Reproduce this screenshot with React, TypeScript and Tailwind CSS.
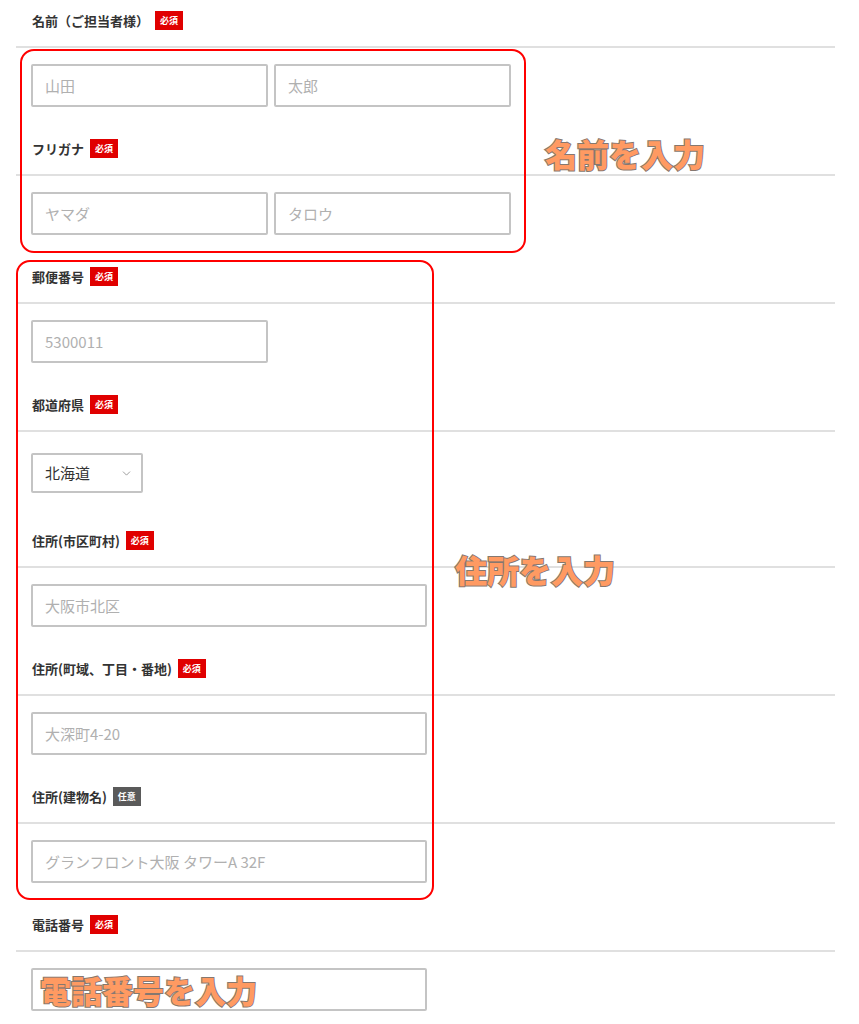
import { ChevronDown } from 'lucide-react';

type Field = {
  label: string;
  optional?: boolean;
  kind: 'pair' | 'short' | 'wide' | 'select';
  placeholders?: string[];
};

const fields: Field[] = [
  { label: '名前（ご担当者様）', kind: 'pair', placeholders: ['山田', '太郎'] },
  { label: 'フリガナ', kind: 'pair', placeholders: ['ヤマダ', 'タロウ'] },
  { label: '郵便番号', kind: 'short', placeholders: ['5300011'] },
  { label: '都道府県', kind: 'select' },
  { label: '住所(市区町村)', kind: 'wide', placeholders: ['大阪市北区'] },
  { label: '住所(町域、丁目・番地)', kind: 'wide', placeholders: ['大深町4-20'] },
  { label: '住所(建物名)', optional: true, kind: 'wide', placeholders: ['グランフロント大阪 タワーA 32F'] },
  { label: '電話番号', kind: 'wide', placeholders: [''] },
];

const inputClass =
  'h-[43px] border-2 border-[#c4c4c4] rounded-[2px] bg-white px-3 text-[15px] text-[#333] placeholder:text-[#b0b0b0] outline-none';

function Badge({ optional }: { optional?: boolean }) {
  return (
    <span
      className={`ml-1.5 inline-flex h-[19px] items-center px-[5px] text-[9px] font-bold leading-none text-white ${
        optional ? 'bg-[#5a5a5a]' : 'bg-[#e00000]'
      }`}
    >
      {optional ? '任意' : '必須'}
    </span>
  );
}

function FormField({ field }: { field: Field }) {
  const isSelect = field.kind === 'select';
  return (
    <div>
      <div className="flex h-[48px] items-center border-b-2 border-[#e0e0e0] pb-[5px] pl-4">
        <span className="text-[13px] font-bold text-[#333]">{field.label}</span>
        <Badge optional={field.optional} />
      </div>
      <div className={isSelect ? 'pt-[21px] pb-[27px] pl-[15px]' : 'pt-4 pb-[21px] pl-[15px]'}>
        {field.kind === 'pair' && (
          <div className="flex gap-[6px]">
            {field.placeholders!.map((p) => (
              <input key={p} className={`${inputClass} w-[237px]`} placeholder={p} />
            ))}
          </div>
        )}
        {field.kind === 'short' && (
          <input className={`${inputClass} w-[237px]`} placeholder={field.placeholders![0]} />
        )}
        {field.kind === 'wide' && (
          <input className={`${inputClass} w-[396px]`} placeholder={field.placeholders![0]} />
        )}
        {isSelect && (
          <div className="relative w-[112px]">
            <select className="h-[40px] w-full appearance-none rounded-[2px] border-2 border-[#c4c4c4] bg-white pl-3 text-[15px] text-[#333] outline-none">
              <option>北海道</option>
            </select>
            <ChevronDown
              size={13}
              strokeWidth={1.5}
              className="pointer-events-none absolute right-[10px] top-[14px] text-[#888]"
            />
          </div>
        )}
      </div>
    </div>
  );
}

const noteClass =
  'absolute font-black leading-none text-[#ff9a62] [paint-order:stroke_fill] [-webkit-text-stroke:2px_#857870]';

export default function App() {
  return (
    <div
      className="relative min-h-[1024px] bg-white"
      style={{ fontFamily: '"Noto Sans CJK JP", "Noto Sans", sans-serif' }}
    >
      <div className="ml-4 w-[819px]">
        {fields.map((f) => (
          <FormField key={f.label} field={f} />
        ))}
      </div>

      {/* annotation overlays */}
      <div className="pointer-events-none absolute left-[20px] top-[49px] h-[204px] w-[506px] rounded-[14px] border-2 border-[#ff0000]" />
      <div className="pointer-events-none absolute left-[16px] top-[260px] h-[640px] w-[418px] rounded-[14px] border-2 border-[#ff0000]" />
      <span className={`${noteClass} left-[545px] top-[137px] text-[32px]`}>名前を入力</span>
      <span className={`${noteClass} left-[455px] top-[553px] text-[32px]`}>住所を入力</span>
      <span className={`${noteClass} left-[40px] top-[974px] text-[31px]`}>電話番号を入力</span>
    </div>
  );
}
